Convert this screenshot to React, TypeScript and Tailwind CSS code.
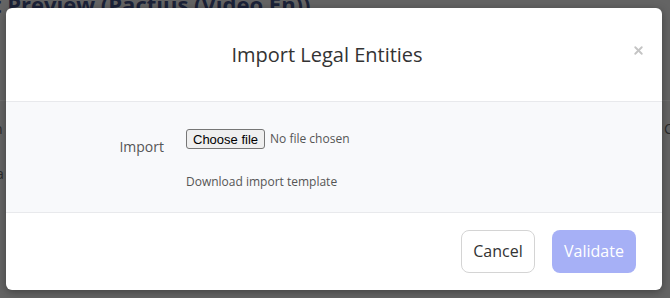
import { X } from "lucide-react";

export default function App() {
    return (
        <div className="relative w-[670px] h-[298px] overflow-hidden bg-[#646464] font-['Open_Sans',sans-serif]">
            {/* page behind the backdrop */}
            <div className="absolute left-[-8px] top-[-12px] text-[22px] font-bold text-[#1b2238] whitespace-nowrap">
                t Preview (Pactius (Video En))
            </div>
            <div className="absolute left-[-6px] top-[118px] text-[14px] text-[#2a2a2a]">n</div>
            <div className="absolute left-[-4px] top-[163px] text-[14px] text-[#2a2a2a]">a</div>
            <div className="absolute left-[664px] top-[118px] text-[14px] text-[#2a2a2a]">C</div>
            <div className="absolute left-0 right-0 top-[100px] h-px bg-[#6c6c6c]" />

            <div className="relative ml-[6px] mt-[8px] w-[656px] h-[282px] bg-white rounded-[6px] shadow-[0_2px_8px_rgba(0,0,0,0.35)] flex flex-col overflow-hidden">
                <div className="relative h-[93px] flex items-center justify-center shrink-0 pr-[14px]">
                    <h2 className="text-[20px] text-[#333] leading-none">Import Legal Entities</h2>
                    <button className="absolute right-[17px] top-[36px] text-[#c4c4c4]">
                        <X className="w-[13px] h-[13px]" strokeWidth={3.5} />
                    </button>
                </div>

                <div className="h-[112px] shrink-0 bg-[#f8f9fb] border-y border-[#e8e9ec] flex pt-[27px]">
                    <div className="w-[158px] text-right pt-[7px] text-[14px] text-[#555]">Import</div>
                    <div className="ml-[22px] flex flex-col">
                        <div className="flex items-center gap-[5px]">
                            <button className="h-[20px] px-[6px] text-[13px] text-black bg-[#efefef] border border-[#767676] rounded-[3px] font-['Liberation_Sans',sans-serif] leading-none">
                                Choose file
                            </button>
                            <span className="text-[12px] text-[#555]">No file chosen</span>
                        </div>
                        <div className="mt-[24px] text-[12px] text-[#555]">Download import template</div>
                    </div>
                </div>

                <div className="flex-1 flex items-center justify-end gap-[17px] pr-[26px] pb-[1px]">
                    <button className="w-[74px] h-[43px] rounded-[8px] border border-[#d4d4d4] bg-white text-[16px] text-[#333]">
                        Cancel
                    </button>
                    <button className="w-[84px] h-[43px] rounded-[8px] bg-[#a6b0f6] text-[16px] text-white">
                        Validate
                    </button>
                </div>
            </div>
        </div>
    );
}
